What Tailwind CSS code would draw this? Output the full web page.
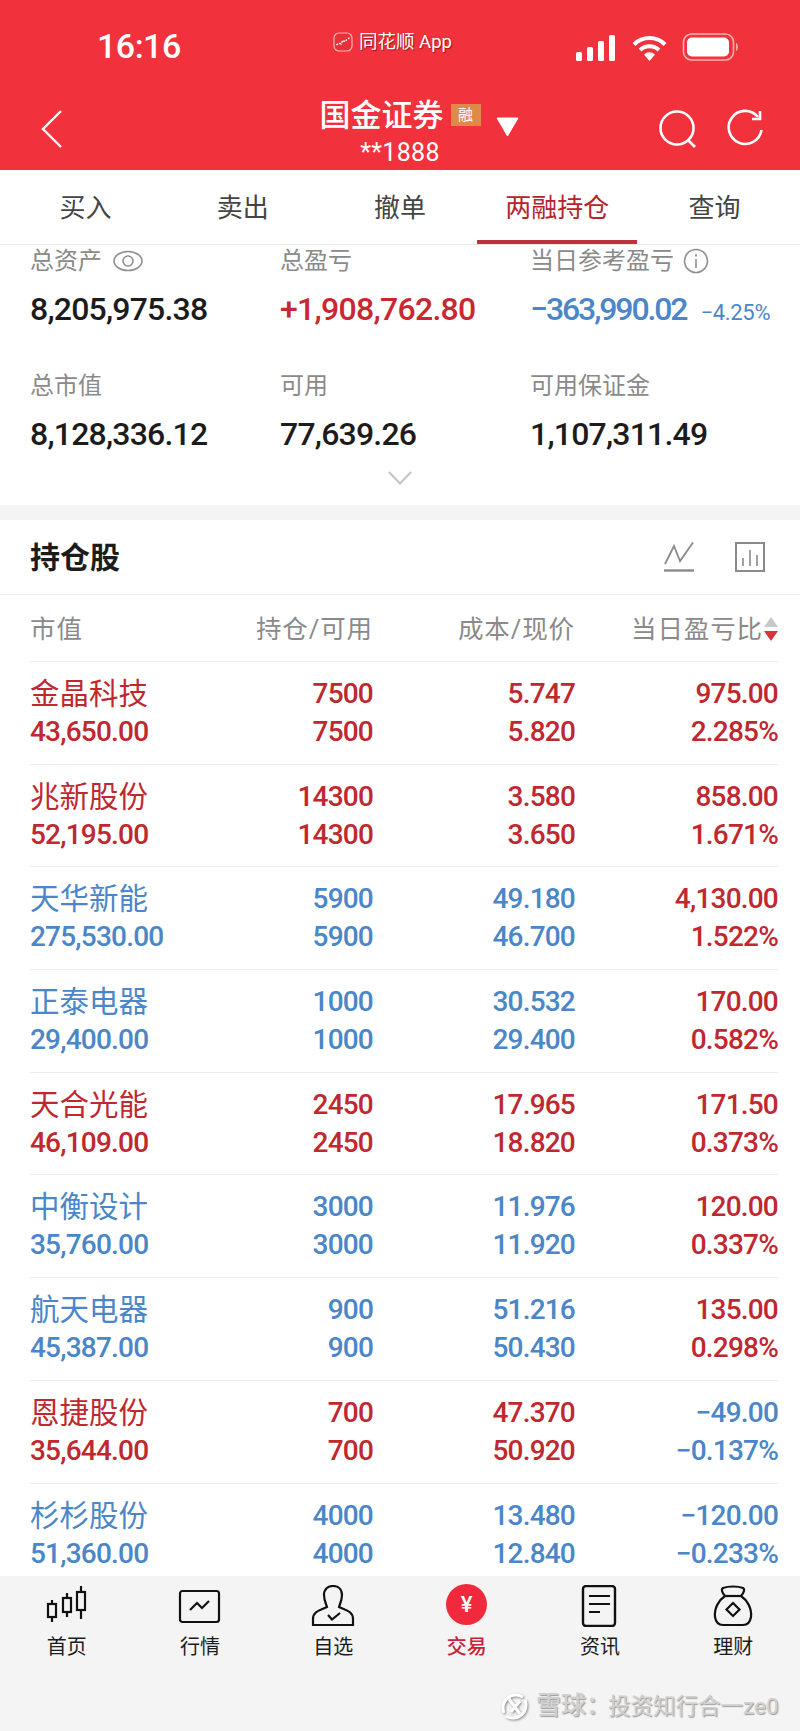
<!DOCTYPE html>
<html lang="zh-CN">
<head>
    <meta charset="UTF-8">
    <meta name="viewport" content="width=device-width, initial-scale=1.0">
    <title>两融持仓</title>
    <script src="https://cdn.jsdelivr.net/npm/@tailwindcss/browser@4"></script>
</head>
<body class="relative w-[800px] h-[1731px] flex flex-col overflow-hidden bg-white font-['Roboto','Noto_Sans_CJK_SC',sans-serif]">

    <!-- red header -->
    <header class="h-[170px] shrink-0 bg-[#f1323c] text-white">
        <div class="h-[90px] pr-[60px] pl-[97px] pt-[28px] flex items-start justify-between">
            <span class="text-[34px] leading-[36px] font-medium tracking-[-0.5px] w-[230px]">16:16</span>
            <div class="flex items-center gap-[6px] h-[28px] ml-[6px] [text-shadow:1px_1px_1px_rgba(90,0,0,0.6)]">
                <svg width="20" height="20" viewBox="0 0 20 20">
                    <rect x="1" y="1" width="18" height="18" rx="5" fill="#e8303a" stroke="#ffb4b4" stroke-width="1.2"/>
                    <path d="M3.5 13 L6 11 L8 12 L10 8 L12 10 L14 7 L16.5 6" fill="none" stroke="#fff" stroke-width="1.4" stroke-dasharray="2 1.5"/>
                </svg>
                <span class="text-[18.5px] leading-[28px]">同花顺 App</span>
            </div>
            <div class="flex items-end gap-[14px] ml-auto pt-[5px]">
                <svg width="42" height="26" viewBox="0 0 42 26" fill="#fff">
                    <rect x="1" y="17" width="6" height="9" rx="1.5"/>
                    <rect x="12" y="12" width="6" height="14" rx="1.5"/>
                    <rect x="23" y="6" width="6" height="20" rx="1.5"/>
                    <rect x="34" y="0" width="6" height="26" rx="1.5"/>
                </svg>
                <svg width="37" height="26" viewBox="0 0 36 26" fill="none" stroke="#fff" stroke-width="4">
                    <path d="M2.5 9.5 A22 22 0 0 1 33.5 9.5"/>
                    <path d="M8.5 15 A14 14 0 0 1 27.5 15"/>
                    <path d="M18 26 L12.5 19.5 A8 8 0 0 1 23.5 19.5 Z" fill="#fff" stroke="none"/>
                </svg>
                <svg width="58" height="28" viewBox="0 0 57 28">
                    <rect x="1" y="1" width="50" height="26" rx="8" fill="none" stroke="#ffb0b0" stroke-width="1.6"/>
                    <rect x="4.5" y="4.5" width="42" height="19" rx="5" fill="#fff"/>
                    <path d="M53.5 10 C56 11 56 17 53.5 18 Z" fill="#ffb0b0"/>
                </svg>
            </div>
        </div>
        <div class="h-[80px] flex justify-between pl-[40px] pr-[36px]">
            <svg class="mt-[19px]" width="24" height="40" viewBox="0 0 24 40" fill="none" stroke="#fff" stroke-width="2.4">
                <path d="M21 2 L3 20 L21 38"/>
            </svg>
            <div class="flex flex-col items-center ml-[116px] mt-[4px]">
                <div class="flex items-start h-[44px]">
                    <span class="text-[31px] leading-[44px] font-medium">国金证券</span>
                    <span class="ml-[7px] mt-[10px] w-[30px] h-[22px] bg-[#e08a4a] text-[15px] leading-[22px] text-center">融</span>
                    <svg class="ml-[15px] mt-[23px]" width="23" height="20" viewBox="0 0 23 20"><path d="M1 1 H22 L11.5 19 Z" fill="#fff" stroke="#fff" stroke-linejoin="round"/></svg>
                </div>
                <span class="text-[25px] leading-[30px] -ml-[38px] tracking-[0.3px]">**1888</span>
            </div>
            <div class="flex gap-[29px] mt-[19px]">
                <svg width="40" height="40" viewBox="0 0 40 40" fill="none" stroke="#fff" stroke-width="2.6">
                    <circle cx="19" cy="19" r="16.5"/>
                    <path d="M30 31 L37 38"/>
                </svg>
                <svg width="37" height="40" viewBox="0 0 37 40" fill="none" stroke="#fff" stroke-width="2.6">
                    <path d="M31 8 A16.5 16.5 0 1 0 34.5 21"/>
                    <path d="M33 2 V10 H25"/>
                </svg>
            </div>
        </div>
    </header>

    <!-- tabs -->
    <nav class="h-[75px] shrink-0 px-[7px] grid grid-cols-5 text-center text-[26px] text-[#444] border-b border-[#e8e8e8]">
        <a class="leading-[77px]">买入</a>
        <a class="leading-[77px]">卖出</a>
        <a class="leading-[77px]">撤单</a>
        <a class="leading-[77px] h-[74px] -mx-[1.5px] text-[#b5232b] border-b-[4px] border-[#b8333b]">两融持仓</a>
        <a class="leading-[77px]">查询</a>
    </nav>

    <main class="flex-1 min-h-0 overflow-hidden">
        <!-- account summary -->
        <section class="h-[260px] pl-[30px] grid grid-cols-[250px_250px_1fr] grid-rows-[32px_44px_32px_44px] content-start">
            <div class="text-[24px] leading-[32px] text-[#8a8a8a] flex items-center gap-[11px]">总资产
                <svg width="30" height="30" viewBox="0 0 30 30" fill="none" stroke="#8f8f8f" stroke-width="1.6"><ellipse cx="15" cy="15" rx="14" ry="9.5"/><circle cx="15" cy="15" r="5"/></svg>
            </div>
            <div class="text-[24px] leading-[32px] text-[#8a8a8a]">总盈亏</div>
            <div class="text-[24px] leading-[32px] text-[#8a8a8a] flex items-center gap-[9px]">当日参考盈亏
                <svg width="26" height="26" viewBox="0 0 26 26" fill="none" stroke="#8f8f8f" stroke-width="1.6"><circle cx="13" cy="13" r="11.5"/><path d="M13 11 V20 M13 6 V8.5"/></svg>
            </div>
            <div class="mt-[10px] text-[32px] leading-[44px] font-medium tracking-[-0.8px] text-[#1c1c1c]">8,205,975.38</div>
            <div class="mt-[10px] text-[32px] leading-[44px] font-medium tracking-[-0.7px] text-[#c8282f]">+1,908,762.80</div>
            <div class="mt-[10px] leading-[44px] whitespace-nowrap text-[#4a86c8]"><span class="text-[32px] font-medium tracking-[-2.1px]">−363,990.02</span><span class="ml-[14px] text-[22px] tracking-[-0.3px]">−4.25%</span></div>
            <div class="mt-[49px] text-[24px] leading-[32px] text-[#8a8a8a]">总市值</div>
            <div class="mt-[49px] text-[24px] leading-[32px] text-[#8a8a8a]">可用</div>
            <div class="mt-[49px] text-[24px] leading-[32px] text-[#8a8a8a]">可用保证金</div>
            <div class="mt-[59px] text-[32px] leading-[44px] font-medium tracking-[-0.8px] text-[#1c1c1c]">8,128,336.12</div>
            <div class="mt-[59px] text-[32px] leading-[44px] font-medium tracking-[-0.8px] text-[#1c1c1c]">77,639.26</div>
            <div class="mt-[59px] text-[32px] leading-[44px] font-medium tracking-[-0.8px] text-[#1c1c1c]">1,107,311.49</div>
        </section>
        <div class="-mt-[34px] h-[34px] flex justify-center">
            <svg width="24" height="14" viewBox="0 0 24 14" fill="none" stroke="#c4c4c4" stroke-width="2"><path d="M1 1 L12 12.5 L23 1"/></svg>
        </div>
        <div class="h-[15px] bg-[#f4f4f4]"></div>

        <!-- holdings title -->
        <div class="h-[75px] pl-[30px] pr-[35px] flex items-center justify-between border-b border-[#ececec]">
            <h2 class="text-[30px] font-bold text-[#1c1c1c]">持仓股</h2>
            <div class="flex gap-[41px]">
                <svg width="30" height="30" viewBox="0 0 30 30" fill="none" stroke="#8a8a8a" stroke-width="1.8"><path d="M1 22 L10 4 L16 19 L29 0.5"/><path d="M0 28.5 H30" stroke-width="2.4"/></svg>
                <svg width="30" height="30" viewBox="0 0 30 30" fill="none" stroke="#8a8a8a" stroke-width="2"><rect x="1" y="1" width="28" height="28"/><path d="M8 24 V16 M15 24 V8 M22 24 V13" stroke-width="1.6"/></svg>
            </div>
        </div>

        <!-- table head -->
        <div class="mx-[30px] w-[748px] h-[67px] pt-[2px] grid grid-cols-[140px_203px_202px_203px] items-center text-right text-[25.5px] tracking-[0.9px] text-[#8a8a8a] border-b border-[#ececec]">
            <div class="text-left">市值</div>
            <div>持仓/可用</div>
            <div>成本/现价</div>
            <div class="flex items-center justify-end gap-[1px]">当日盈亏比
                <svg width="14" height="24" viewBox="0 0 14 24"><path d="M7 0 L14 10 H0 Z" fill="#c8c8c8"/><path d="M0 14 H14 L7 24 Z" fill="#d8343a"/></svg>
            </div>
        </div>

        <!-- rows -->
        <div class="mx-[30px] w-[748px] text-[28px] leading-[38px] font-medium tracking-[-0.8px] text-right">
            <div class="h-[102.7px] pt-[13px] grid grid-cols-[140px_203px_202px_203px] text-[#c0282f] border-b border-[#ececec]">
                <div class="text-left whitespace-nowrap"><div class="text-[29.5px] font-normal tracking-normal">金晶科技</div><div>43,650.00</div></div>
                <div><div>7500</div><div>7500</div></div>
                <div><div>5.747</div><div>5.820</div></div>
                <div><div>975.00</div><div>2.285%</div></div>
            </div>
            <div class="h-[102.7px] pt-[13px] grid grid-cols-[140px_203px_202px_203px] text-[#c0282f] border-b border-[#ececec]">
                <div class="text-left whitespace-nowrap"><div class="text-[29.5px] font-normal tracking-normal">兆新股份</div><div>52,195.00</div></div>
                <div><div>14300</div><div>14300</div></div>
                <div><div>3.580</div><div>3.650</div></div>
                <div><div>858.00</div><div>1.671%</div></div>
            </div>
            <div class="h-[102.7px] pt-[13px] grid grid-cols-[140px_203px_202px_203px] text-[#4a86c8] border-b border-[#ececec]">
                <div class="text-left whitespace-nowrap"><div class="text-[29.5px] font-normal tracking-normal">天华新能</div><div>275,530.00</div></div>
                <div><div>5900</div><div>5900</div></div>
                <div><div>49.180</div><div>46.700</div></div>
                <div class="text-[#c0282f]"><div>4,130.00</div><div>1.522%</div></div>
            </div>
            <div class="h-[102.7px] pt-[13px] grid grid-cols-[140px_203px_202px_203px] text-[#4a86c8] border-b border-[#ececec]">
                <div class="text-left whitespace-nowrap"><div class="text-[29.5px] font-normal tracking-normal">正泰电器</div><div>29,400.00</div></div>
                <div><div>1000</div><div>1000</div></div>
                <div><div>30.532</div><div>29.400</div></div>
                <div class="text-[#c0282f]"><div>170.00</div><div>0.582%</div></div>
            </div>
            <div class="h-[102.7px] pt-[13px] grid grid-cols-[140px_203px_202px_203px] text-[#c0282f] border-b border-[#ececec]">
                <div class="text-left whitespace-nowrap"><div class="text-[29.5px] font-normal tracking-normal">天合光能</div><div>46,109.00</div></div>
                <div><div>2450</div><div>2450</div></div>
                <div><div>17.965</div><div>18.820</div></div>
                <div><div>171.50</div><div>0.373%</div></div>
            </div>
            <div class="h-[102.7px] pt-[13px] grid grid-cols-[140px_203px_202px_203px] text-[#4a86c8] border-b border-[#ececec]">
                <div class="text-left whitespace-nowrap"><div class="text-[29.5px] font-normal tracking-normal">中衡设计</div><div>35,760.00</div></div>
                <div><div>3000</div><div>3000</div></div>
                <div><div>11.976</div><div>11.920</div></div>
                <div class="text-[#c0282f]"><div>120.00</div><div>0.337%</div></div>
            </div>
            <div class="h-[102.7px] pt-[13px] grid grid-cols-[140px_203px_202px_203px] text-[#4a86c8] border-b border-[#ececec]">
                <div class="text-left whitespace-nowrap"><div class="text-[29.5px] font-normal tracking-normal">航天电器</div><div>45,387.00</div></div>
                <div><div>900</div><div>900</div></div>
                <div><div>51.216</div><div>50.430</div></div>
                <div class="text-[#c0282f]"><div>135.00</div><div>0.298%</div></div>
            </div>
            <div class="h-[102.7px] pt-[13px] grid grid-cols-[140px_203px_202px_203px] text-[#c0282f] border-b border-[#ececec]">
                <div class="text-left whitespace-nowrap"><div class="text-[29.5px] font-normal tracking-normal">恩捷股份</div><div>35,644.00</div></div>
                <div><div>700</div><div>700</div></div>
                <div><div>47.370</div><div>50.920</div></div>
                <div class="text-[#4a86c8]"><div>−49.00</div><div>−0.137%</div></div>
            </div>
            <div class="h-[102.7px] pt-[13px] grid grid-cols-[140px_203px_202px_203px] text-[#4a86c8]">
                <div class="text-left whitespace-nowrap"><div class="text-[29.5px] font-normal tracking-normal">杉杉股份</div><div>51,360.00</div></div>
                <div><div>4000</div><div>4000</div></div>
                <div><div>13.480</div><div>12.840</div></div>
                <div><div>−120.00</div><div>−0.233%</div></div>
            </div>
        </div>
    </main>

    <!-- bottom nav -->
    <footer class="h-[155px] shrink-0 bg-[#f4f4f4] grid grid-cols-6 text-center text-[20px] text-[#1c1c1c]">
        <a class="flex flex-col items-center pt-[9px]">
            <svg width="44" height="42" viewBox="0 0 44 42" fill="none" stroke="#111" stroke-width="2.2">
                <rect x="3" y="19" width="8" height="13"/><path d="M7 15 V19 M7 32 V37"/>
                <rect x="18" y="13" width="8" height="14"/><path d="M22 8 V13 M22 27 V32"/>
                <rect x="32" y="7" width="8" height="18"/><path d="M36 1 V7 M36 25 V34"/>
            </svg>
            <span class="mt-[6px] leading-[28px]">首页</span>
        </a>
        <a class="flex flex-col items-center pt-[9px]">
            <svg width="44" height="42" viewBox="0 0 44 42" fill="none" stroke="#111" stroke-width="2.2">
                <rect x="2" y="6" width="39" height="31" rx="2.5"/>
                <path d="M12 25 L19 18 L24 23 L31 16"/>
            </svg>
            <span class="mt-[6px] leading-[28px]">行情</span>
        </a>
        <a class="flex flex-col items-center pt-[9px]">
            <svg width="44" height="42" viewBox="0 0 44 42" fill="none" stroke="#111" stroke-width="2.2">
                <path d="M13 10 C13 4 17 1 22 1 C27 1 31 4 31 10 C31 15 29 19 28 22 C34 25 42 26 42 34 V40 H2 V34 C2 26 10 25 16 22 C15 19 13 15 13 10 Z"/>
                <path d="M17 30 L21 34.5 L29 28"/>
            </svg>
            <span class="mt-[6px] leading-[28px]">自选</span>
        </a>
        <a class="flex flex-col items-center pt-[9px]">
            <div class="w-[41px] h-[41px] -mt-[1px] mb-[2px] rounded-full bg-[#f02a3c] text-white text-[22px] leading-[41px] font-medium">¥</div>
            <span class="mt-[6px] leading-[28px] font-medium text-[#c9243a]">交易</span>
        </a>
        <a class="flex flex-col items-center pt-[9px]">
            <svg width="44" height="42" viewBox="0 0 44 42" fill="none" stroke="#111" stroke-width="2.4">
                <rect x="5" y="1" width="32" height="40" rx="3"/>
                <path d="M11 11 H32 M11 19 H32 M11 27 H22" stroke-width="2"/>
            </svg>
            <span class="mt-[6px] leading-[28px]">资讯</span>
        </a>
        <a class="flex flex-col items-center pt-[9px]">
            <svg width="44" height="42" viewBox="0 0 44 42" fill="none" stroke="#111" stroke-width="2.2">
                <path d="M14 11 C11 8 10 4 12 3 C17 1 27 1 32 3 C34 4 33 8 30 11 C36 15 41 23 40 32 C39 38 36 40 32 40 H12 C8 40 5 38 4 32 C3 23 8 15 14 11 Z"/>
                <path d="M14 11 H30"/>
                <path d="M22 18 L28.5 24.5 L22 31 L15.5 24.5 Z"/>
            </svg>
            <span class="mt-[6px] leading-[28px]">理财</span>
        </a>
    </footer>

    <!-- watermark sits over the nav -->
    <div class="absolute left-[499px] top-[1690px] flex items-center gap-[6px] text-[#d0d0d0] leading-[32px] [text-shadow:1px_1px_1px_rgba(120,120,120,0.7)] whitespace-nowrap">
        <svg width="31" height="31" viewBox="0 0 31 31" fill="none" stroke="#fff" stroke-width="3" class="drop-shadow-[1px_1px_1px_rgba(110,110,110,0.8)]"><path d="M24 6 A13 13 0 0 0 5 22"/><path d="M7 25 A13 13 0 0 0 26 9"/><path d="M10 8 L21 23 M21 10 L12 21"/></svg>
        <span class="text-[25px] font-medium">雪球：<span class="text-[22.5px] -ml-[3px] font-normal">投资知行合一ze0</span></span>
    </div>

</body>
</html>
